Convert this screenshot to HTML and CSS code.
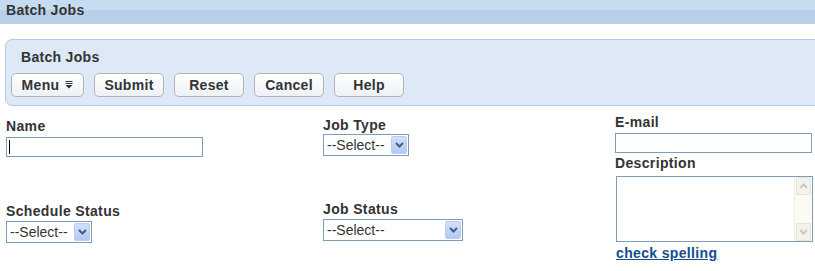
FILE: index.html
```html
<!DOCTYPE html>
<html lang="en">
<head>
    <meta charset="UTF-8">
    <meta name="viewport" content="width=device-width, initial-scale=1.0">
    <title>Batch Jobs</title>
    <link rel="stylesheet" href="styles.css">
</head>
<body>
    <div class="page-title">Batch Jobs</div>

    <div class="panel">
        <div class="panel-title">Batch Jobs</div>
        <div class="toolbar">
            <button class="btn btn-menu">Menu
                <svg width="8" height="8" viewBox="0 0 8 8"><rect x="0.5" y="0" width="7" height="1" fill="#333"/><rect x="0.5" y="2" width="7" height="1" fill="#333"/><path d="M0.5 4h7L4 7.5z" fill="#333"/></svg>
            </button>
            <button class="btn">Submit</button>
            <button class="btn">Reset</button>
            <button class="btn">Cancel</button>
            <button class="btn">Help</button>
        </div>
    </div>

    <div class="form">
        <div class="col col-1">
            <label class="field-label lbl-name">Name</label>
            <div class="input-wrap">
                <input type="text" class="text-input name-input">
                <span class="caret"></span>
            </div>

            <label class="field-label lbl-sched">Schedule Status</label>
            <span class="select select-short">
                <select><option>--Select--</option></select>
                <span class="select-btn"><svg width="9" height="6" viewBox="0 0 9 6"><path d="M1 1l3.5 3.5L8 1" fill="none" stroke="#4a5d82" stroke-width="2"/></svg></span>
            </span>
        </div>

        <div class="col col-2">
            <label class="field-label lbl-type">Job Type</label>
            <span class="select select-short">
                <select><option>--Select--</option></select>
                <span class="select-btn"><svg width="9" height="6" viewBox="0 0 9 6"><path d="M1 1l3.5 3.5L8 1" fill="none" stroke="#4a5d82" stroke-width="2"/></svg></span>
            </span>

            <label class="field-label lbl-status">Job Status</label>
            <span class="select select-long">
                <select><option>--Select--</option></select>
                <span class="select-btn"><svg width="9" height="6" viewBox="0 0 9 6"><path d="M1 1l3.5 3.5L8 1" fill="none" stroke="#4a5d82" stroke-width="2"/></svg></span>
            </span>
        </div>

        <div class="col col-3">
            <label class="field-label lbl-email">E-mail</label>
            <input type="text" class="text-input email-input">

            <label class="field-label lbl-desc">Description</label>
            <div class="textarea-box">
                <textarea></textarea>
                <div class="scrollbar">
                    <span class="scroll-btn"><svg width="9" height="6" viewBox="0 0 9 6"><path d="M1 5l3.5-3.5L8 5" fill="none" stroke="#c9c9c0" stroke-width="2"/></svg></span>
                    <span class="scroll-track"></span>
                    <span class="scroll-btn"><svg width="9" height="6" viewBox="0 0 9 6"><path d="M1 1l3.5 3.5L8 1" fill="none" stroke="#c9c9c0" stroke-width="2"/></svg></span>
                </div>
            </div>
            <a href="#" class="spell-link">check spelling</a>
        </div>
    </div>
</body>
</html>
```

FILE: styles.css
```css
body {
    margin: 0;
    font-family: "Liberation Sans", Arial, sans-serif;
    font-size: 14px;
    color: #333;
    background: #fff;
    overflow: hidden;
}
.page-title {
    height: 20px;
    padding: 2px 6px;
    line-height: 16px;
    font-weight: bold;
    letter-spacing: 0.3px;
    background: linear-gradient(#c6daf0 0, #c6daf0 10px, #b7cfe9 10px);
}
.panel {
    margin: 15px -20px 0 5px;
    padding: 9px 5px 8px;
    background: #dde9f6;
    border: 1px solid #b5cce6;
    border-radius: 7px;
}
.panel-title {
    padding-left: 10px;
    line-height: 16px;
    font-weight: bold;
    letter-spacing: 0.3px;
}
.toolbar {
    display: flex;
    gap: 10px;
    margin-top: 8px;
}
.btn {
    width: 70px;
    height: 24px;
    padding: 0;
    font-family: inherit;
    font-size: 14px;
    font-weight: bold;
    letter-spacing: 0.3px;
    color: #333;
    background: linear-gradient(#ffffff, #edf1f6);
    border: 1px solid #b3b3b3;
    border-radius: 5px;
}
.btn-menu {
    width: 73px;
    display: flex;
    align-items: center;
    justify-content: center;
    gap: 6px;
}
.form {
    display: grid;
    grid-template-columns: 317px 292px 1fr;
    padding-left: 6px;
}
.col {
    display: flex;
    flex-direction: column;
    align-items: flex-start;
}
.field-label {
    display: block;
    padding-top: 1px;
    line-height: 15px;
    font-weight: bold;
    letter-spacing: 0.35px;
}
.lbl-name { margin-top: 12px; }
.lbl-sched { margin-top: 46px; }
.lbl-type { margin-top: 11px; }
.lbl-status { margin-top: 45px; }
.lbl-email { margin-top: 8px; }
.lbl-desc { margin-top: 2px; }
.input-wrap {
    position: relative;
    margin-top: 3px;
}
.text-input {
    box-sizing: border-box;
    height: 20px;
    margin: 0;
    padding: 0 3px;
    font-family: inherit;
    font-size: 14px;
    border: 1px solid #7f9db9;
    outline: none;
}
.name-input { width: 197px; }
.email-input {
    width: 197px;
    margin-top: 3px;
}
.caret {
    position: absolute;
    left: 3px;
    top: 3px;
    width: 1px;
    height: 14px;
    background: #000;
}
.select {
    display: inline-flex;
    box-sizing: border-box;
    height: 22px;
    margin-top: 2px;
    padding: 1px;
    border: 1px solid #7f9db9;
    background: #fff;
}
.col-2 .select-short { margin-top: 1px; }
.select-short { width: 86px; }
.select-long { width: 140px; }
.select select {
    flex: 1;
    min-width: 0;
    -webkit-appearance: none;
    appearance: none;
    margin: 0;
    padding: 0 0 0 2px;
    font-family: inherit;
    font-size: 14px;
    color: #333;
    background: #fff;
    border: none;
    outline: none;
}
.select-btn {
    display: flex;
    align-items: center;
    justify-content: center;
    box-sizing: border-box;
    width: 16px;
    border: 1px solid #bccdf0;
    border-radius: 2px;
    background: linear-gradient(#d2e0fa, #b3c8f3);
}
.textarea-box {
    display: flex;
    box-sizing: border-box;
    width: 197px;
    height: 66px;
    margin: 5px 0 0 1px;
    border: 1px solid #7f9db9;
}
.textarea-box textarea {
    flex: 1;
    margin: 0;
    padding: 2px;
    border: none;
    outline: none;
    resize: none;
}
.scrollbar {
    display: flex;
    flex-direction: column;
    width: 17px;
    background: #fbfbf5;
    border-left: 1px solid #eeeee6;
}
.scroll-btn {
    display: flex;
    align-items: center;
    justify-content: center;
    height: 16px;
    margin: 0 1px;
    background: #f3f3ec;
    border: 1px solid #e4e4da;
    border-radius: 2px;
}
.scroll-track { flex: 1; }
.spell-link {
    margin: 3px 0 0 1px;
    line-height: 16px;
    font-weight: bold;
    letter-spacing: 0.35px;
    color: #134d8d;
}
```
